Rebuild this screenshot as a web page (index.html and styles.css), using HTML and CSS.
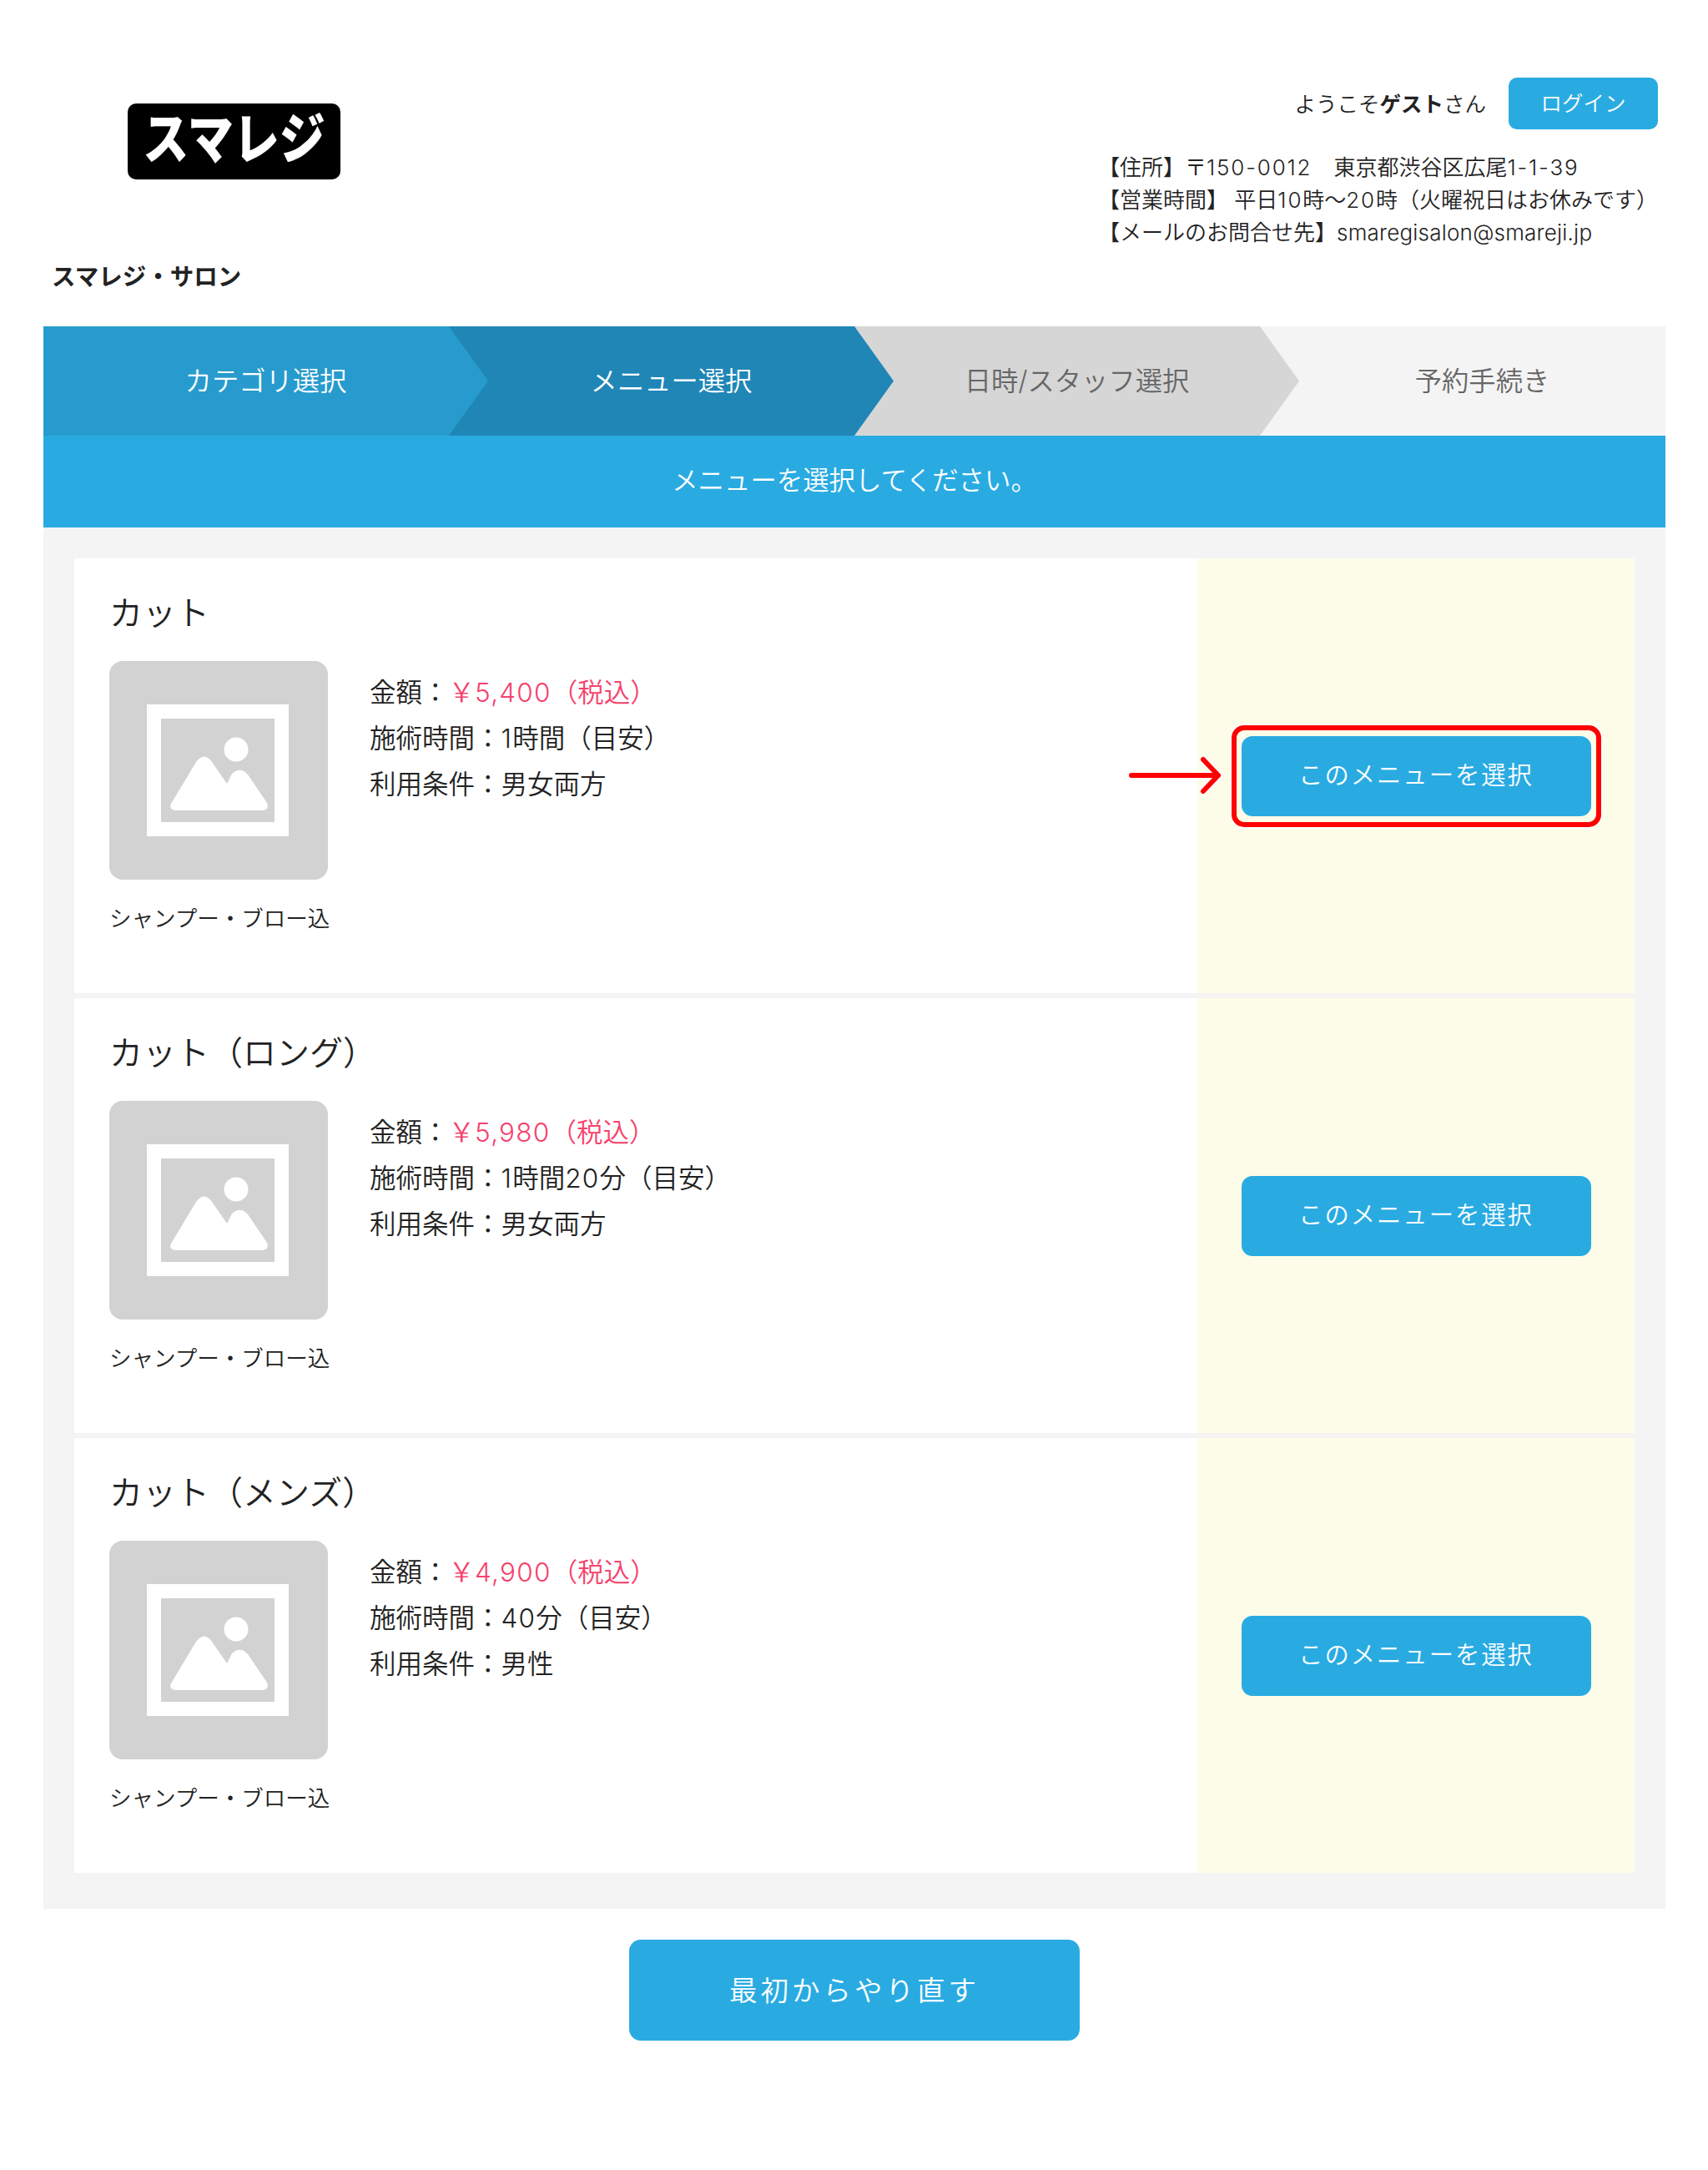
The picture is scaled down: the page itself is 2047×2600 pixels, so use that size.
FILE: index.html
```html
<!DOCTYPE html>
<html lang="ja">
<head>
<meta charset="utf-8">
<title>スマレジ・サロン</title>
<link rel="stylesheet" href="styles.css">
</head>
<body>
<svg class="defs" width="0" height="0" aria-hidden="true">
  <symbol id="photo" viewBox="0 0 262 262">
    <path fill="#fff" d="M45 52H215V210H45Z"/>
    <path fill="#d2d2d2" d="M62 69H198V193H62Z"/>
    <ellipse fill="#fff" cx="152" cy="106" rx="14.5" ry="14.5"/>
    <path fill="#fff" d="M79 179Q71 178 74 171L104 121Q114 108 123 121L141 147L147 135Q157 126 166 136L189 170Q192 178 184 179Z"/>
  </symbol>
</svg>
<header class="header">
  <div class="brand">
    <div class="logo"><span class="logo-text">スマレジ</span></div>
    <div class="shop-name">スマレジ・サロン</div>
  </div>
  <div class="shop-info">
    <div class="user-row">
      <span class="welcome">ようこそ<b>ゲスト</b>さん</span>
      <a class="btn login">ログイン</a>
    </div>
    <p class="address">【住所】〒<span class="num">150-0012</span>　東京都渋谷区広尾<span class="num">1-1-39</span><br>【営業時間】 平日<span class="num">10</span>時～<span class="num">20</span>時（火曜祝日はお休みです）<br>【メールのお問合せ先】<span class="mail">smaregisalon@smareji.jp</span></p>
  </div>
</header>
<main class="main">
  <ol class="steps">
    <li class="step step-1">カテゴリ選択</li>
    <li class="step step-2">メニュー選択</li>
    <li class="step step-3">日時/スタッフ選択</li>
    <li class="step step-4">予約手続き</li>
  </ol>
  <div class="notice">メニューを選択してください。</div>
  <div class="menu-list">
    <section class="card">
      <div class="card-main">
        <h2 class="card-title">カット</h2>
        <div class="card-body">
          <svg class="photo"><use href="#photo"/></svg>
          <div class="details">
            <div>金額：<span class="price">￥<span class="num">5,400</span>（税込）</span></div>
            <div>施術時間：<span class="num">1</span>時間（目安）</div>
            <div>利用条件：男女両方</div>
          </div>
        </div>
        <p class="caption">シャンプー・ブロー込</p>
      </div>
      <div class="card-side">
        <div class="select-wrap">
          <a class="btn select">このメニューを選択</a>
          <span class="highlight"></span>
          <svg class="pointer" width="122" height="58" viewBox="0 0 122 58" fill="none" stroke-linecap="round" stroke-linejoin="round">
            <path stroke="#fff" stroke-width="10" d="M6 28H110M92 9L110 28L92 47"/>
            <path stroke="#f00" stroke-width="6" d="M6 28H110M92 9L110 28L92 47"/>
          </svg>
        </div>
      </div>
    </section>
    <section class="card">
      <div class="card-main">
        <h2 class="card-title">カット（ロング）</h2>
        <div class="card-body">
          <svg class="photo"><use href="#photo"/></svg>
          <div class="details">
            <div>金額：<span class="price">￥<span class="num">5,980</span>（税込）</span></div>
            <div>施術時間：<span class="num">1</span>時間<span class="num">20</span>分（目安）</div>
            <div>利用条件：男女両方</div>
          </div>
        </div>
        <p class="caption">シャンプー・ブロー込</p>
      </div>
      <div class="card-side">
        <div class="select-wrap"><a class="btn select">このメニューを選択</a></div>
      </div>
    </section>
    <section class="card">
      <div class="card-main">
        <h2 class="card-title">カット（メンズ）</h2>
        <div class="card-body">
          <svg class="photo"><use href="#photo"/></svg>
          <div class="details">
            <div>金額：<span class="price">￥<span class="num">4,900</span>（税込）</span></div>
            <div>施術時間：<span class="num">40</span>分（目安）</div>
            <div>利用条件：男性</div>
          </div>
        </div>
        <p class="caption">シャンプー・ブロー込</p>
      </div>
      <div class="card-side">
        <div class="select-wrap"><a class="btn select">このメニューを選択</a></div>
      </div>
    </section>
  </div>
  <div class="restart-row"><a class="btn restart">最初からやり直す</a></div>
</main>
</body>
</html>
```
FILE: styles.css
```css
* { box-sizing: border-box; }
html, body { margin: 0; padding: 0; background: #fff; }
body {
  font-family: Inter, "Noto Sans CJK JP", sans-serif;
  font-weight: 350;
  color: #222;
}
.defs { position: absolute; }
.num { letter-spacing: 0.07em; }
.mail { letter-spacing: 0.008em; }

.header {
  height: 391px;
  padding: 93px 60px 0 62px;
  display: flex;
  justify-content: space-between;
}
.brand { display: flex; flex-direction: column; align-items: flex-start; }
.logo {
  width: 255px;
  height: 91px;
  margin: 31px 0 0 91px;
  background: #000;
  border-radius: 10px;
  display: flex;
  align-items: center;
  justify-content: center;
  overflow: hidden;
}
.logo-text {
  display: inline-block;
  color: #fff;
  font-weight: 900;
  font-size: 55px;
  line-height: 1;
  transform: translateY(-3px) scaleY(1.2);
}
.shop-name { margin-top: 97px; font-size: 28.5px; line-height: 40px; font-weight: 700; }

.shop-info { display: flex; flex-direction: column; align-items: flex-end; }
.user-row { display: flex; align-items: center; gap: 27px; }
.welcome { font-size: 25.5px; padding-bottom: 3px; }
.welcome b { font-weight: 700; }
.btn {
  display: flex;
  align-items: center;
  justify-content: center;
  background: #29abe2;
  color: #fff;
}
.login { width: 179px; height: 62px; padding-bottom: 5px; border-radius: 10px; font-size: 25.5px; }
.address {
  align-self: stretch;
  margin: 26px 0 0;
  font-size: 26px;
  line-height: 39px;
  white-space: nowrap;
}

.main { margin: 0 51px 0 52px; }
.steps { list-style: none; margin: 0; padding: 0; display: flex; background: #f4f4f4; }
.step {
  flex: 1 1 0;
  position: relative;
  height: 131px;
  padding: 0 0 6px 47px;
  display: flex;
  align-items: center;
  justify-content: center;
  font-size: 32.3px;
}
.step::after {
  content: "";
  position: absolute;
  top: 0;
  left: 100%;
  width: 47px;
  height: 100%;
  clip-path: polygon(0 0, 100% 50%, 0 100%);
  background: inherit;
  z-index: 1;
}
.step-1 { background: #279bcd; color: #fff; }
.step-2 { background: #1f86b6; color: #fff; }
.step-3 { background: #d6d6d6; color: #666; }
.step-4 { background: #f4f4f4; color: #666; }
.step-4::after { display: none; }

.notice {
  height: 110px;
  padding-bottom: 8px;
  display: flex;
  align-items: center;
  justify-content: center;
  background: #29abe2;
  color: #fff;
  font-size: 31.4px;
}

.menu-list {
  padding: 37px 37px 43px;
  background: #f4f4f4;
  display: flex;
  flex-direction: column;
  gap: 6px;
}
.card { height: 521px; display: flex; background: #fff; }
.card-main { flex: 1 1 0; padding-left: 42px; }
.card-title { margin: 41px 0 0; font-size: 40px; line-height: 50px; font-weight: 350; }
.card-body { display: flex; margin-top: 32px; }
.photo { width: 262px; height: 262px; background: #d2d2d2; border-radius: 16px; flex: none; }
.details { margin-left: 50px; padding-top: 10px; font-size: 31.5px; line-height: 55px; }
.details .num { letter-spacing: 0.04em; }
.price { color: #f5426c; }
.caption { margin: 26px 0 0; font-size: 26.5px; line-height: 40px; }
.card-side {
  flex: none;
  width: 524px;
  background: #fdfce8;
  display: flex;
  align-items: center;
  justify-content: center;
}
.select-wrap { position: relative; }
.select { width: 419px; height: 96px; padding-bottom: 8px; border-radius: 13px; font-size: 29.3px; letter-spacing: 2px; }
.highlight {
  position: absolute;
  inset: -13px -12px;
  border: 6px solid #f00;
  border-radius: 15px;
  box-shadow: 0 0 0 2px #fff;
}
.pointer { position: absolute; left: -138px; top: 19px; }

.restart-row { display: flex; justify-content: center; padding: 37px 0 155px; }
.restart { width: 540px; height: 121px; padding-bottom: 5px; border-radius: 14px; font-size: 33.5px; letter-spacing: 4px; }
```
